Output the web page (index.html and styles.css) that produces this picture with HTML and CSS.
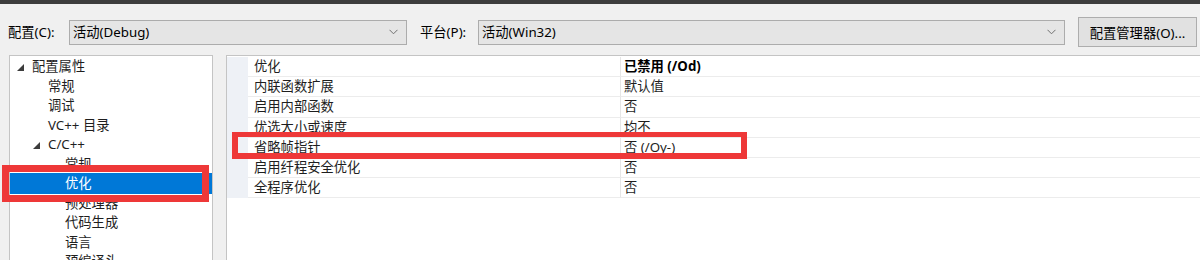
FILE: index.html
```html
<!DOCTYPE html>
<html lang="zh-CN">
<head>
<meta charset="utf-8">
<title>属性页</title>
<link rel="stylesheet" href="styles.css">
</head>
<body>
<div class="topbar"></div>
<div class="toolbar">
  <span class="label label-config">配置(C):</span>
  <div class="combo combo-config">
    <span class="combo-text">活动(Debug)</span>
    <svg class="chev" width="9" height="6" viewBox="0 0 9 6"><path d="M0.5 0.8 L4.5 4.8 L8.5 0.8" fill="none" stroke="#707070" stroke-width="1"/></svg>
  </div>
  <span class="label label-platform">平台(P):</span>
  <div class="combo combo-platform">
    <span class="combo-text">活动(Win32)</span>
    <svg class="chev" width="9" height="6" viewBox="0 0 9 6"><path d="M0.5 0.8 L4.5 4.8 L8.5 0.8" fill="none" stroke="#707070" stroke-width="1"/></svg>
  </div>
  <button class="btn">配置管理器(O)...</button>
</div>
<div class="main">
  <div class="tree">
    <div class="node lvl0"><span class="tog"><svg width="7" height="7" viewBox="0 0 7 7"><path d="M7 0 L7 7 L0 7 Z" fill="#3c3c3c"/></svg></span><span>配置属性</span></div>
    <div class="node lvl1"><span class="tog"></span><span>常规</span></div>
    <div class="node lvl1"><span class="tog"></span><span>调试</span></div>
    <div class="node lvl1"><span class="tog"></span><span>VC++ 目录</span></div>
    <div class="node lvl1"><span class="tog"><svg width="7" height="7" viewBox="0 0 7 7"><path d="M7 0 L7 7 L0 7 Z" fill="#3c3c3c"/></svg></span><span>C/C++</span></div>
    <div class="node lvl2"><span class="tog"></span><span>常规</span></div>
    <div class="node lvl2 selected"><span class="tog"></span><span>优化</span></div>
    <div class="node lvl2"><span class="tog"></span><span>预处理器</span></div>
    <div class="node lvl2"><span class="tog"></span><span>代码生成</span></div>
    <div class="node lvl2"><span class="tog"></span><span>语言</span></div>
    <div class="node lvl2"><span class="tog"></span><span>预编译头</span></div>
  </div>
  <div class="grid">
    <div class="row"><div class="gut"></div><div class="name">优化</div><div class="val bold">已禁用 (/Od)</div></div>
    <div class="row"><div class="gut"></div><div class="name">内联函数扩展</div><div class="val">默认值</div></div>
    <div class="row"><div class="gut"></div><div class="name">启用内部函数</div><div class="val">否</div></div>
    <div class="row"><div class="gut"></div><div class="name">优选大小或速度</div><div class="val">均不</div></div>
    <div class="row"><div class="gut"></div><div class="name">省略帧指针</div><div class="val">否 (/Oy-)</div></div>
    <div class="row"><div class="gut"></div><div class="name">启用纤程安全优化</div><div class="val">否</div></div>
    <div class="row"><div class="gut"></div><div class="name">全程序优化</div><div class="val">否</div></div>
  </div>
</div>
<div class="mark mark-tree"></div>
<div class="mark mark-grid"></div>
</body>
</html>
```
FILE: styles.css
```css
* { box-sizing: border-box; }
html, body {
  margin: 0;
  padding: 0;
  width: 1200px;
  height: 260px;
  overflow: hidden;
  background: #f0f0f0;
  font-family: "Noto Sans", "Noto Sans CJK SC", sans-serif;
  font-size: 13.3px;
  color: #000;
}
body { position: relative; }
.topbar {
  height: 4px;
  background: #3d3d3d;
}
.toolbar {
  display: flex;
  align-items: center;
  height: 30px;
  margin-top: 13px;
  padding-left: 8px;
}
.label {
  line-height: 20px;
  white-space: nowrap;
}
.label-config { width: 61px; }
.label-platform { width: 58px; margin-left: 13px; }
.combo {
  height: 25px;
  background: #e5e5e5;
  border: 1px solid #acacac;
  display: flex;
  align-items: center;
  justify-content: space-between;
  padding: 0 8px 0 3px;
}
.combo-config { width: 338px; }
.combo-platform { width: 587px; }
.combo-text { line-height: 20px; }
.chev { display: block; }
.btn {
  margin-left: 13px;
  width: 119px;
  height: 30px;
  background: #e1e1e1;
  border: 1px solid #adadad;
  font-family: inherit;
  font-size: 13.3px;
  color: #000;
  padding: 0;
}
.main {
  display: flex;
  margin-top: 8px;
  padding-left: 9px;
  gap: 13px;
  height: 210px;
}
.tree {
  width: 204px;
  background: #fff;
  border: 1px solid #c4c4c4;
  border-bottom: none;
  padding-top: 1px;
}
.node {
  display: flex;
  align-items: center;
  height: 19.5px;
  line-height: 19.5px;
  color: #1e1e1e;
  white-space: nowrap;
}
.node.lvl0 { padding-left: 7px; }
.node.lvl1 { padding-left: 23px; }
.node.lvl2 { padding-left: 40px; }
.tog {
  width: 15px;
  display: flex;
  align-items: center;
}
.tog svg { display: block; margin-top: 1px; }
.node.selected {
  background: #0078d7;
  color: #fff;
  height: 21px;
  margin: -1px 0 -0.5px;
}
.grid {
  flex: 1;
  background: #fff;
  border-top: 1px solid #c4c4c4;
  border-left: 1px solid #c4c4c4;
  padding-top: 1px;
}
.row {
  display: flex;
  height: 20.2px;
}
.gut {
  width: 21px;
  background: #eef1f6;
}
.name {
  width: 373px;
  padding-left: 6px;
  border-right: 1px solid #e6e6e6;
  border-bottom: 1px solid #ececec;
  line-height: 19px;
  color: #1e1e1e;
}
.val {
  flex: 1;
  padding-left: 3px;
  border-bottom: 1px solid #ececec;
  line-height: 19px;
  color: #1e1e1e;
}
.val.bold { font-weight: bold; color: #000; }
.mark {
  position: absolute;
  border: 7px solid #ee3838;
}
.mark-tree {
  left: 2px;
  top: 165px;
  width: 207px;
  height: 37px;
}
.mark-grid {
  left: 232px;
  top: 132px;
  width: 515px;
  height: 27px;
  border-width: 6px;
  border-top-width: 5px;
}
```
